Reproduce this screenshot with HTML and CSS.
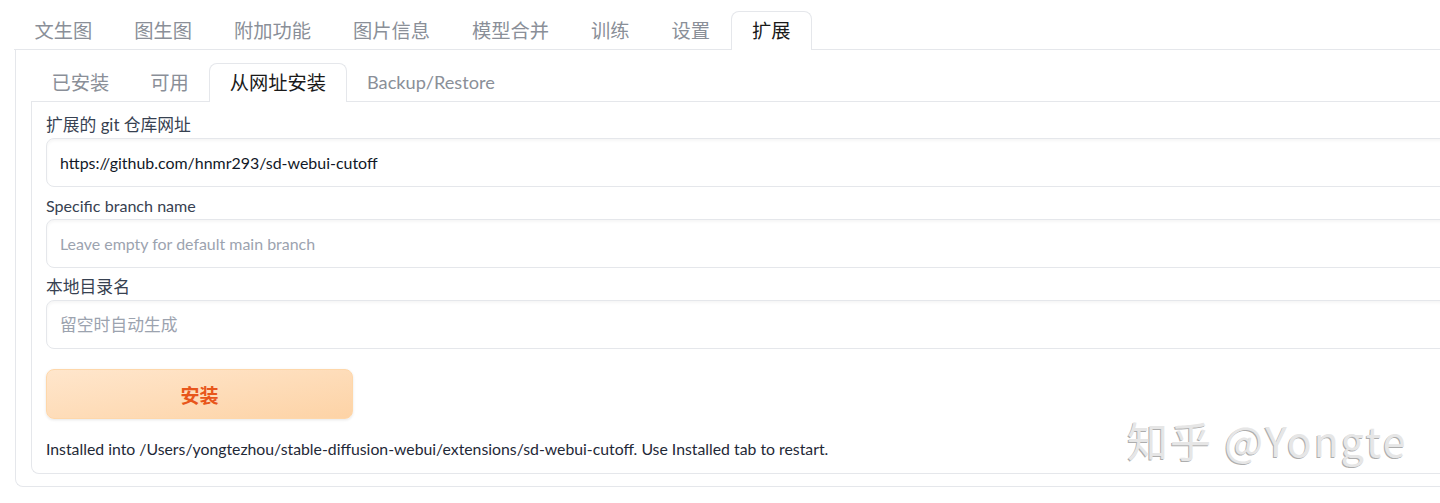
FILE: index.html
```html
<!DOCTYPE html>
<html lang="zh">
<head>
<meta charset="utf-8">
<title>Extensions</title>
<link rel="stylesheet" href="styles.css">
</head>
<body>
<div class="app">
  <div class="tabs top-tabs">
    <div class="tab">文生图</div>
    <div class="tab">图生图</div>
    <div class="tab">附加功能</div>
    <div class="tab">图片信息</div>
    <div class="tab">模型合并</div>
    <div class="tab">训练</div>
    <div class="tab">设置</div>
    <div class="tab active">扩展</div>
  </div>
  <div class="panel outer">
    <div class="tabs inner-tabs">
      <div class="tab">已安装</div>
      <div class="tab">可用</div>
      <div class="tab active">从网址安装</div>
      <div class="tab latin">Backup/Restore</div>
    </div>
    <div class="panel inner">
      <div class="field">
        <label class="label">扩展的 git 仓库网址</label>
        <div class="input latin">https://github.com/hnmr293/sd-webui-cutoff</div>
      </div>
      <div class="field">
        <label class="label latin">Specific branch name</label>
        <div class="input latin placeholder">Leave empty for default main branch</div>
      </div>
      <div class="field">
        <label class="label">本地目录名</label>
        <div class="input placeholder">留空时自动生成</div>
      </div>
      <button class="btn">安装</button>
      <div class="result">Installed into /Users/yongtezhou/stable-diffusion-webui/extensions/sd-webui-cutoff. Use Installed tab to restart.</div>
    </div>
  </div>
</div>
<div class="watermark">知乎 @Yongte</div>
</body>
</html>
```
FILE: styles.css
```css
html, body {
  margin: 0;
  padding: 0;
  background: #ffffff;
  overflow: hidden;
}
body {
  font-family: "Lato", "Noto Sans CJK SC", sans-serif;
  color: #1f2937;
  position: relative;
  height: 503px;
}
.app {
  width: 1480px;
  padding: 11px 0 0 13.5px;
}
.tabs {
  display: flex;
  border-bottom: 1px solid #e5e7eb;
  height: 38px;
}
.tab {
  font-family: "Noto Sans CJK SC", sans-serif;
  font-size: 19.25px;
  color: #8a8f98;
  padding: 0 20px;
  line-height: 36px;
  height: 38px;
  box-sizing: border-box;
  border: 1px solid transparent;
  border-bottom: none;
}
.inner-tabs .tab {
  padding: 0 19.5px;
}
.tab.latin {
  font-family: "Lato", "Noto Sans CJK SC", sans-serif;
  font-size: 18.2px;
}
.tab.active {
  color: #1a1a1a;
  background: #ffffff;
  border-color: #e5e7eb;
  border-radius: 8px 8px 0 0;
  height: 39px;
  margin-bottom: -1px;
}
.panel {
  border: 1px solid #e5e7eb;
  border-top: none;
  border-right: none;
  border-radius: 0 0 0 8px;
}
.outer {
  margin-left: 1px;
  padding: 13px 0 12px 15.5px;
}
.inner {
  padding: 12px 0 13px 14px;
}
.field {
  display: flex;
  flex-direction: column;
  gap: 2px;
  margin-bottom: 8px;
}
.label {
  font-size: 16.8px;
  line-height: 22px;
  color: #374151;
}
.label.latin {
  font-size: 16.1px;
}
.input {
  height: 49px;
  box-sizing: border-box;
  border: 1px solid #e5e7eb;
  border-radius: 8px;
  box-shadow: inset 0 2px 3px rgba(0, 0, 0, 0.04);
  padding: 0 13px;
  font-size: 16.8px;
  line-height: 47px;
  color: #111827;
  background: #ffffff;
}
.input.latin {
  font-size: 15.95px;
}
.input.placeholder {
  color: #9ca3af;
}
.btn {
  display: block;
  margin-top: 20px;
  width: 307px;
  height: 50px;
  border: 1px solid #fed7aa;
  border-radius: 8px;
  background: linear-gradient(to bottom right, #ffe6cc, #fdd3a6);
  box-shadow: 0 1px 3px rgba(0, 0, 0, 0.1);
  font-family: "Noto Sans CJK SC", sans-serif;
  font-size: 19px;
  font-weight: 700;
  color: #e8561b;
  cursor: pointer;
}
.result {
  margin-top: 19px;
  font-size: 15.8px;
  line-height: 22px;
  color: #1f2937;
}
.watermark {
  position: absolute;
  left: 1127px;
  top: 413px;
  font-family: "Noto Sans CJK SC", sans-serif;
  font-size: 41px;
  line-height: 52px;
  color: #e6e6e6;
  text-shadow: -1px 1px 0 #adadad;
  letter-spacing: 2px;
}
```
